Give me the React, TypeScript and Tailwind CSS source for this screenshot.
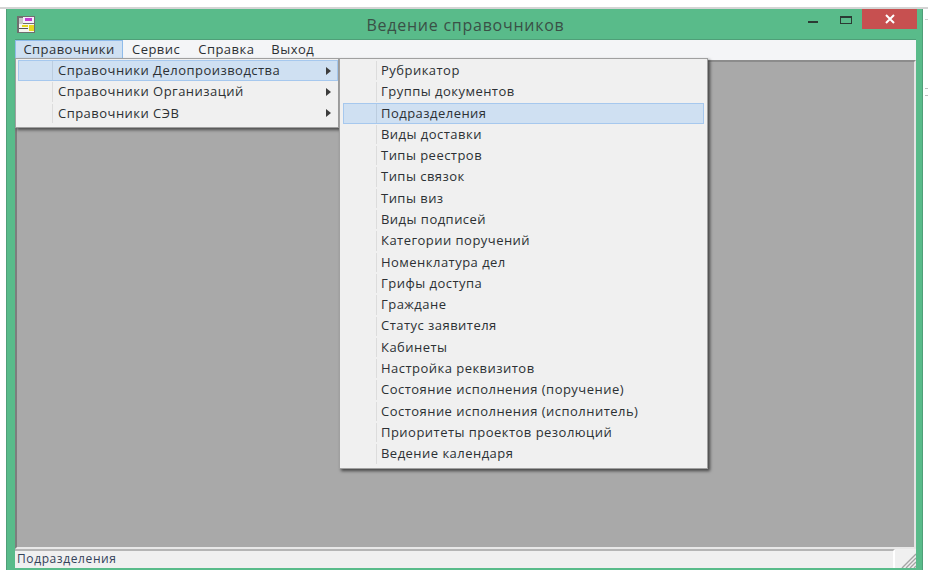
import React from 'react';

const orgGroups = ['Справочники Делопроизводства', 'Справочники Организаций', 'Справочники СЭВ'];

const docItems = [
  'Рубрикатор',
  'Группы документов',
  'Подразделения',
  'Виды доставки',
  'Типы реестров',
  'Типы связок',
  'Типы виз',
  'Виды подписей',
  'Категории поручений',
  'Номенклатура дел',
  'Грифы доступа',
  'Граждане',
  'Статус заявителя',
  'Кабинеты',
  'Настройка реквизитов',
  'Состояние исполнения (поручение)',
  'Состояние исполнения (исполнитель)',
  'Приоритеты проектов резолюций',
  'Ведение календаря',
];

function AppIcon() {
  return (
    <svg width="20" height="20" viewBox="0 0 20 20" className="shrink-0">
      <rect x="0" y="1" width="18" height="17" fill="#6f6f6f" />
      <rect x="2" y="3" width="4" height="13" fill="#c9c9c9" />
      <rect x="6" y="2" width="11" height="6" fill="#f4f0fb" />
      <rect x="8" y="3" width="7" height="3" fill="#c23fd0" />
      <rect x="2" y="9" width="15" height="8" fill="#f6f6f0" />
      <rect x="5" y="10" width="6" height="2" fill="#e6d820" />
      <rect x="12" y="10" width="5" height="6" fill="#e6d820" />
      <rect x="2" y="13" width="9" height="1" fill="#555" />
    </svg>
  );
}

function Arrow() {
  return (
    <svg width="7" height="8" viewBox="0 0 7 8">
      <path d="M1 0 L6 4 L1 8 Z" fill="#3c3c3c" />
    </svg>
  );
}

export default function App() {
  return (
    <div className="relative w-[928px] h-[570px] bg-white pt-[7px] overflow-hidden text-[13px] tracking-[0.47px] text-[#2c3034] font-['Open_Sans','Liberation_Sans',sans-serif]">
      <div className="h-[2px] bg-[#d4d4d4]" />

      {/* window frame */}
      <div className="ml-[6px] w-[917px] h-[561px] flex flex-col bg-[#59bb8a] border-l border-l-[#4f9f78] border-r border-r-[#4f9f78]">
        <div className="h-[30px] shrink-0 flex items-start pl-[10px]">
          <div className="pt-[6px]">
            <AppIcon />
          </div>
          <div className="flex-1 text-center pt-[4px] pl-[86px] text-[16px] tracking-[0.75px] text-[#3a5046]">
            Ведение справочников
          </div>
          <div className="flex items-start shrink-0 mr-[5px]">
            <div className="w-[10px] h-[2px] bg-[#2b3a33] mt-[12px] mr-[22px]" />
            <div className="w-[12px] h-[8px] border border-[#2b3a33] border-t-2 mt-[7px] mr-[10px]" />
            <div className="w-[55px] h-[20px] bg-[#c75050] flex items-center justify-center">
              <svg width="10" height="10" viewBox="0 0 10 10">
                <path d="M1 1 L9 9 M9 1 L1 9" stroke="#fff" strokeWidth="2" />
              </svg>
            </div>
          </div>
        </div>

        <div className="ml-[8px] mr-[6px] mb-[2px] flex-1 flex flex-col min-h-0 border-t border-t-[#4f9f78]">
          {/* menu bar */}
          <div className="h-[20px] shrink-0 flex items-center bg-[#f4f5f7]">
            <div className="h-[20px] w-[108px] flex items-center justify-center bg-[#cfe0f2] border border-[#8fbbea]">
              Справочники
            </div>
            <div className="ml-[9px]">Сервис</div>
            <div className="ml-[18px]">Справка</div>
            <div className="ml-[17px]">Выход</div>
          </div>

          {/* MDI client area */}
          <div className="flex-1 min-h-0 bg-[#a9a9a9] border-t-2 border-t-[#8c8c8c] border-l-2 border-l-[#7d7d7d] border-r-2 border-r-[#e4e4e4] border-b-2 border-b-[#e8e8e8]" />

          {/* status bar */}
          <div className="h-[19px] shrink-0 flex bg-[#f0f0f0]">
            <div className="flex-1 border-t-2 border-t-[#b5b5b5] border-r-2 border-r-[#ffffff] pl-[2px] text-[12px] tracking-[0.6px] leading-[16px] text-[#33425a]">
              Подразделения
            </div>
            <div className="w-[21px] flex items-end justify-end">
              <svg width="15" height="15" viewBox="0 0 15 15">
                <path d="M1 15 L15 1 M5 15 L15 5 M9 15 L15 9 M13 15 L15 13" stroke="#a4a4a4" strokeWidth="1.4" />
              </svg>
            </div>
          </div>
        </div>
      </div>

      {/* first level dropdown */}
      <div className="absolute left-[15px] top-[58px] w-[324px] bg-[#f0f0f0] border border-[#a0a0a0] pt-[1px] pb-[3px] pl-[2px] shadow-[2px_2px_3px_rgba(0,0,0,0.55)]">
        {orgGroups.map((label, i) => (
          <div
            key={label}
            className={`h-[21.3px] flex items-center border ${i === 0 ? 'bg-[#cfe0f2] border-[#a6c8ee]' : 'border-transparent'}`}
          >
            <div className={`w-[34px] h-full shrink-0 border-r ${i === 0 ? 'border-r-[#bccddf]' : 'border-r-[#dcdcdc]'}`} />
            <div className="flex-1 pl-[5px]">{label}</div>
            <div className="w-[12px] shrink-0 flex"><Arrow /></div>
          </div>
        ))}
      </div>

      {/* second level dropdown */}
      <div className="absolute left-[339px] top-[58px] w-[369px] bg-[#f0f0f0] border border-[#a0a0a0] pt-[1px] pb-[3px] pl-[3px] pr-[3px] shadow-[2px_2px_3px_rgba(0,0,0,0.6)]">
        {docItems.map((label, i) => (
          <div
            key={label}
            className={`h-[21.3px] flex items-center border ${i === 2 ? 'bg-[#cfe0f2] border-[#a6c8ee]' : 'border-transparent'}`}
          >
            <div className={`w-[33px] h-full shrink-0 border-r ${i === 2 ? 'border-r-[#bccddf]' : 'border-r-[#dcdcdc]'}`} />
            <div className="pl-[4px]">{label}</div>
          </div>
        ))}
      </div>

      {/* stray edges of whatever sits behind the window */}
      <div className="absolute left-[925px] top-[19px] w-[3px] h-px bg-[#d0d0d0]" />
      <div className="absolute left-[925px] top-[88px] w-[3px] h-px bg-[#c0c0c0]" />
      <div className="absolute left-[925px] top-[95px] w-[3px] h-px bg-[#c0c0c0]" />
    </div>
  );
}
